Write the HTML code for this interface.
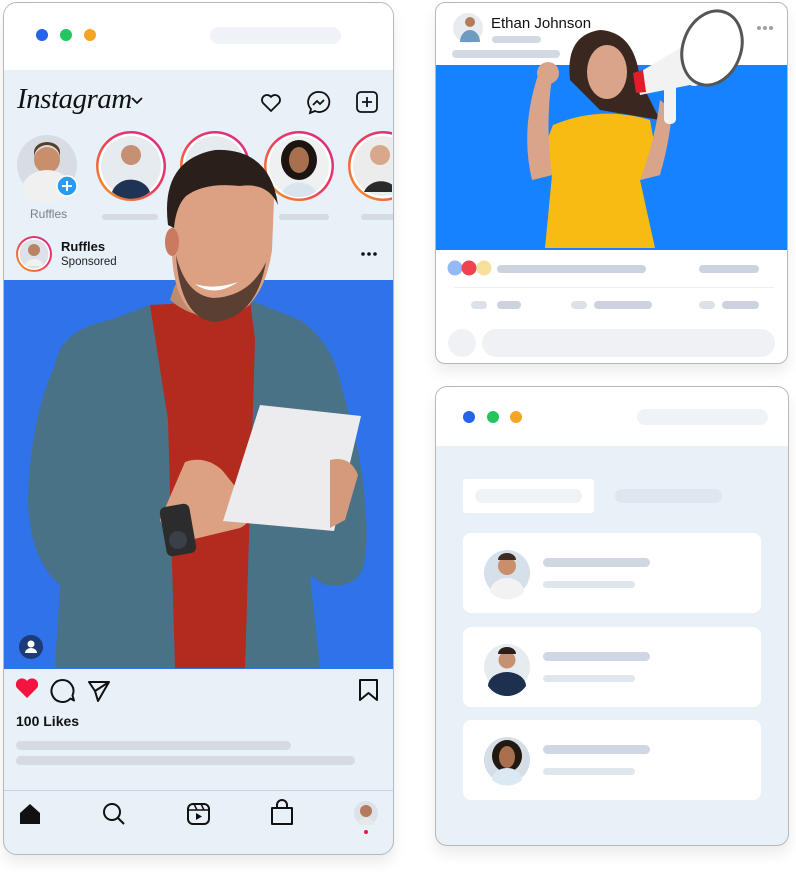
<!DOCTYPE html>
<html><head><meta charset="utf-8"><style>
*{margin:0;padding:0;box-sizing:border-box}
body{width:796px;height:880px;background:#fff;font-family:"Liberation Sans",Arial,sans-serif;position:relative;overflow:hidden}
.abs{position:absolute}
.card{position:absolute;border:1.5px solid #b8b8b8;border-radius:14px;overflow:hidden;box-shadow:0 8px 14px rgba(0,0,0,.08)}
.dot{position:absolute;width:12px;height:12px;border-radius:50%}
.bar{position:absolute;border-radius:6px}
</style></head><body>

<!-- LEFT PHONE -->
<div class="card" style="left:3px;top:2px;width:391px;height:853px;background:#e8f0f8">
  <div class="abs" style="left:0;top:0;width:100%;height:67px;background:#fff"></div>
  <div class="dot" style="left:32px;top:26px;background:#2563eb"></div>
  <div class="dot" style="left:56px;top:26px;background:#22c55e"></div>
  <div class="dot" style="left:80px;top:26px;background:#f5a524"></div>
  <div class="bar" style="left:206px;top:24px;width:131px;height:17px;background:#eff3f8;border-radius:9px"></div>

  <div class="abs" style="left:13px;top:80px;font-family:'Liberation Serif',serif;font-style:italic;font-size:29px;color:#111;letter-spacing:-0.5px">Instagram</div>
  <div class="bar" style="left:0;top:787px;width:100%;height:1px;background:#ccd3dd;border-radius:0"></div>
  <div class="abs" style="left:26px;top:204px;font-size:12px;color:#7a7f87">Ruffles</div>
  <div class="bar" style="left:98px;top:211px;width:56px;height:6px;background:#d6dbe3"></div>
  <div class="bar" style="left:275px;top:211px;width:50px;height:6px;background:#d6dbe3"></div>
  <div class="bar" style="left:357px;top:211px;width:40px;height:6px;background:#d6dbe3"></div>
  <div class="abs" style="left:57px;top:236px;font-size:13px;font-weight:bold;color:#111">Ruffles</div>
  <div class="abs" style="left:57px;top:253px;font-size:11.5px;color:#222">Sponsored</div>
  <div class="abs" style="left:0;top:277px;width:100%;height:389px;background:#2f72ea"></div>
  <div class="abs" style="left:12px;top:710px;font-size:14px;font-weight:bold;color:#111">100 Likes</div>
  <div class="bar" style="left:12px;top:738px;width:275px;height:9px;background:#d6dbe3"></div>
  <div class="bar" style="left:12px;top:753px;width:339px;height:9px;background:#d6dbe3"></div>
</div>

<!-- RIGHT TOP CARD -->
<div class="card" style="left:435px;top:2px;width:353px;height:362px;background:#fff;border-radius:10px">
  <div class="abs" style="left:55px;top:12px;font-size:15px;color:#111">Ethan Johnson</div>
  <div class="bar" style="left:56px;top:33px;width:49px;height:7px;background:#d3d9e2"></div>
  <div class="bar" style="left:16px;top:47px;width:108px;height:8px;background:#d3d9e2"></div>
  <div class="abs" style="left:0;top:62px;width:100%;height:185px;background:#1682ff"></div>
  <div class="bar" style="left:61px;top:262px;width:149px;height:8px;background:#ccd3de"></div>
  <div class="bar" style="left:263px;top:262px;width:60px;height:8px;background:#ccd3de"></div>
  <div class="bar" style="left:18px;top:284px;width:320px;height:1px;background:#eceff3"></div>
  <div class="bar" style="left:35px;top:298px;width:16px;height:8px;background:#dde2ea"></div>
  <div class="bar" style="left:61px;top:298px;width:24px;height:8px;background:#ccd3de"></div>
  <div class="bar" style="left:135px;top:298px;width:16px;height:8px;background:#dde2ea"></div>
  <div class="bar" style="left:158px;top:298px;width:58px;height:8px;background:#ccd3de"></div>
  <div class="bar" style="left:263px;top:298px;width:16px;height:8px;background:#dde2ea"></div>
  <div class="bar" style="left:286px;top:298px;width:37px;height:8px;background:#ccd3de"></div>
  <div class="abs" style="left:12px;top:326px;width:28px;height:28px;border-radius:50%;background:#eff1f5"></div>
  <div class="bar" style="left:46px;top:326px;width:293px;height:28px;border-radius:14px;background:#eff1f5"></div>
</div>

<!-- RIGHT BOTTOM CARD -->
<div class="card" style="left:435px;top:386px;width:354px;height:460px;background:#e8f0f8;border-radius:12px">
  <div class="abs" style="left:0;top:0;width:100%;height:59px;background:#fff"></div>
  <div class="dot" style="left:27px;top:24px;background:#2563eb"></div>
  <div class="dot" style="left:51px;top:24px;background:#22c55e"></div>
  <div class="dot" style="left:74px;top:24px;background:#f5a524"></div>
  <div class="bar" style="left:201px;top:22px;width:131px;height:16px;background:#eff3f8;border-radius:8px"></div>
  <div class="bar" style="left:27px;top:92px;width:131px;height:34px;background:#fff;border-radius:3px"></div>
  <div class="bar" style="left:39px;top:102px;width:107px;height:14px;background:#eff3f8;border-radius:7px"></div>
  <div class="bar" style="left:179px;top:102px;width:107px;height:14px;background:#dfe6ef;border-radius:7px"></div>
  <div class="bar" style="left:27px;top:146px;width:298px;height:80px;background:#fff;border-radius:8px"></div>
  <div class="bar" style="left:27px;top:240px;width:298px;height:80px;background:#fff;border-radius:8px"></div>
  <div class="bar" style="left:27px;top:333px;width:298px;height:80px;background:#fff;border-radius:8px"></div>
  <div class="bar" style="left:107px;top:171px;width:107px;height:9px;background:#cfd7e3"></div>
  <div class="bar" style="left:107px;top:194px;width:92px;height:7px;background:#e0e6ee"></div>
  <div class="bar" style="left:107px;top:265px;width:107px;height:9px;background:#cfd7e3"></div>
  <div class="bar" style="left:107px;top:288px;width:92px;height:7px;background:#e0e6ee"></div>
  <div class="bar" style="left:107px;top:358px;width:107px;height:9px;background:#cfd7e3"></div>
  <div class="bar" style="left:107px;top:381px;width:92px;height:7px;background:#e0e6ee"></div>
</div>

<svg class="abs" style="left:0;top:0" width="796" height="880" viewBox="0 0 796 880">
 <defs>
  <linearGradient id="ring" x1="0" y1="1" x2="1" y2="0">
   <stop offset="0" stop-color="#f7a21b"/><stop offset="0.5" stop-color="#ee3a5a"/><stop offset="1" stop-color="#d62a8a"/>
  </linearGradient>
  <clipPath id="phone"><rect x="4" y="0" width="388" height="880"/></clipPath>
 </defs>
 <path d="M132 98 l5 5 l5 -5" fill="none" stroke="#111" stroke-width="1.8"/>
 <path d="M271 111 l-8 -8 a4.6 4.6 0 0 1 8 -6 a4.6 4.6 0 0 1 8 6 z" fill="none" stroke="#111" stroke-width="1.8" stroke-linejoin="round"/>
 <path d="M319 92 a10 10 0 1 1 -4 19 l-5 2 l1 -4 a10 10 0 0 1 8 -17 z" fill="none" stroke="#111" stroke-width="1.8"/>
 <path d="M313 105 l4 -4 l3 3 l4 -4" fill="none" stroke="#111" stroke-width="1.8"/>
 <rect x="357" y="92" width="20" height="20" rx="4" fill="none" stroke="#111" stroke-width="1.8"/>
 <path d="M367 97 v10 M362 102 h10" stroke="#111" stroke-width="1.8"/>

 <g clip-path="url(#phone)">
 <circle cx="47" cy="165" r="30" fill="#d8dde4"/>
 <circle cx="47" cy="160" r="13" fill="#c98f6d"/><path d="M34 158 a13 13 0 0 1 26 0 l0 -6 a13 10 0 0 0 -26 0z" fill="#5a3e2c"/>
 <path d="M22 190 a25 20 0 0 1 50 0 a30 30 0 0 1 -50 0z" fill="#f0f0f0"/>
 <circle cx="67" cy="186" r="10" fill="#2b9af3" stroke="#fff" stroke-width="1.5"/>
 <path d="M67 181 v10 M62 186 h10" stroke="#fff" stroke-width="2"/>
  <circle cx="131" cy="166" r="35" fill="url(#ring)"/><circle cx="131" cy="166" r="32.5" fill="#fff"/><circle cx="131" cy="166" r="30" fill="#e6ebf0"/>
  <circle cx="131" cy="155" r="10" fill="#c69072"/><path d="M112 192 a20 18 0 0 1 38 0 a30 30 0 0 1 -38 0z" fill="#1f3454"/>
  <circle cx="215" cy="166" r="35" fill="url(#ring)"/><circle cx="215" cy="166" r="32.5" fill="#fff"/><circle cx="215" cy="166" r="30" fill="#e6ebf0"/>
  <circle cx="299" cy="166" r="35" fill="url(#ring)"/><circle cx="299" cy="166" r="32.5" fill="#fff"/><circle cx="299" cy="166" r="30" fill="#eef0f2"/>
  <ellipse cx="299" cy="160" rx="18" ry="20" fill="#1b1410"/><ellipse cx="299" cy="160" rx="10" ry="13" fill="#a8704e"/><path d="M282 192 a18 14 0 0 1 34 0 a30 30 0 0 1 -34 0z" fill="#d8e4ee"/>
  <circle cx="383" cy="166" r="35" fill="url(#ring)"/><circle cx="383" cy="166" r="32.5" fill="#fff"/><circle cx="383" cy="166" r="30" fill="#ececec"/>
  <circle cx="380" cy="155" r="10" fill="#d9a88a"/><path d="M364 192 a18 16 0 0 1 34 0z" fill="#2a2a2a"/>

 <circle cx="34" cy="254" r="18" fill="url(#ring)"/><circle cx="34" cy="254" r="16" fill="#fff"/><circle cx="34" cy="254" r="14.5" fill="#dde2e8"/>
 <circle cx="34" cy="250" r="6" fill="#b98263"/><path d="M25 266 a9 7 0 0 1 18 0z" fill="#f0f0f0"/>
 <circle cx="363" cy="254" r="1.8" fill="#111"/><circle cx="369" cy="254" r="1.8" fill="#111"/><circle cx="375" cy="254" r="1.8" fill="#111"/>

 <!-- man -->
 <path d="M55 365 Q60 330 110 320 L150 305 L250 300 L300 320 Q330 340 340 380 L358 450 Q370 520 365 560 Q360 590 325 585 L310 575 L320 668 L55 668 Q58 620 60 585 Q30 560 28 500 Q30 420 55 365 z" fill="#4a7286"/>
 <path d="M150 305 L250 300 L255 340 L245 668 L175 668 L168 420 Z" fill="#b32a1f"/>
 <path d="M170 300 Q205 330 250 305 L248 285 L175 285 Z" fill="#c08a6c"/>
 <path d="M172 200 Q172 160 222 158 Q274 160 274 200 L272 250 Q262 318 212 320 Q175 316 172 255 Z" fill="#dca183"/>
 <ellipse cx="172" cy="242" rx="7" ry="14" fill="#c97a60"/>
 <path d="M176 255 Q180 318 214 322 Q256 318 266 262 Q250 296 214 298 Q186 296 176 255 Z" fill="#5a3f32"/>
 <path d="M195 284 Q214 298 238 282 Q214 290 195 284z" fill="#fff"/>
 <path d="M168 225 Q160 160 215 150 Q270 148 278 205 Q268 182 240 186 Q205 182 186 196 Q176 206 174 228 Z" fill="#2a1f1a"/>
 <path d="M185 462 Q205 455 222 470 L250 505 Q255 520 240 528 L190 540 L172 548 L160 520 Z" fill="#dca183"/>
 <rect x="163" y="505" width="30" height="50" rx="6" fill="#2c2c2c" transform="rotate(-10 178 530)"/>
 <circle cx="178" cy="540" r="9" fill="#3a3f48"/>
 <path d="M260 405 L361 416 L334 531 L223 521 Z" fill="#ececee"/>
 <path d="M330 460 Q350 455 358 475 L345 520 L330 528 Z" fill="#d49a7c"/>
 </g>
 <circle cx="31" cy="647" r="12" fill="#1c3b78"/><circle cx="31" cy="644" r="3.5" fill="#fff"/><path d="M25 653 a6 5 0 0 1 12 0z" fill="#fff"/>

 <path d="M27 698 l-10 -10 a5.7 5.7 0 0 1 10 -7 a5.7 5.7 0 0 1 10 7 z" fill="#f5133f"/>
 <path d="M70.5 698.5 a11 11 0 1 1 2 -3 l1.5 5 z" fill="none" stroke="#111" stroke-width="2" stroke-linejoin="round"/>
 <path d="M89 682 l20 0 l-11 19 l-3 -10 z M95 691 l14 -9" fill="none" stroke="#111" stroke-width="2" stroke-linejoin="round"/>
 <path d="M360 680 h17 v20 l-8.5 -7 l-8.5 7 z" fill="none" stroke="#111" stroke-width="2" stroke-linejoin="round"/>

 <path d="M20 824 v-11 l10 -9 l10 9 v11 z" fill="#111"/>
 <circle cx="112" cy="812" r="8" fill="none" stroke="#111" stroke-width="2"/><path d="M118 818 l6 6" stroke="#111" stroke-width="2"/>
 <rect x="188" y="804" width="21" height="20" rx="5" fill="none" stroke="#111" stroke-width="2"/>
 <path d="M188 810 h21 M194 804 l3 6 M201 804 l3 6" stroke="#111" stroke-width="1.5"/><path d="M196 813 v7 l6 -3.5z" fill="#111"/>
 <path d="M272 808 h20 v16 h-20 z M277 808 v-3 a5 5 0 0 1 10 0 v3" fill="none" stroke="#111" stroke-width="2" stroke-linejoin="round"/>
 <circle cx="366" cy="813" r="12" fill="#dde2e8"/><circle cx="366" cy="811" r="6" fill="#b27b5c"/><path d="M358 825 a8 7 0 0 1 16 0z" fill="#e8e8e8"/>
 <circle cx="366" cy="832" r="2" fill="#f5133f"/>

 <circle cx="468" cy="28" r="15" fill="#e8ecf0"/><circle cx="470" cy="22" r="5" fill="#b27b5c"/><path d="M460 42 a10 12 0 0 1 20 0z" fill="#6d9cc0"/>
 <circle cx="759" cy="28" r="2" fill="#9aa1ab"/><circle cx="765" cy="28" r="2" fill="#9aa1ab"/><circle cx="771" cy="28" r="2" fill="#9aa1ab"/>
 <!-- woman -->
 <path d="M570 80 Q565 35 600 30 Q635 32 640 80 L660 120 L600 110 Z" fill="#3a2720"/>
 <ellipse cx="607" cy="72" rx="20" ry="27" fill="#d9a48a"/>
 <path d="M553 125 Q600 105 650 120 L660 175 L640 180 L655 248 L545 248 L552 175 L532 180 Z" fill="#f7bb12"/>
 <path d="M532 180 Q520 130 538 75 L552 78 Q545 125 552 175 Z" fill="#d9a48a"/>
 <circle cx="548" cy="73" r="11" fill="#d9a48a"/>
 <path d="M640 180 L660 175 Q670 140 672 110 L660 100 Q655 140 640 180Z" fill="#d9a48a"/>
 <path d="M635 75 L690 42 Q700 30 710 50 L712 70 Q700 90 690 85 L640 95 Z" fill="#f2f2f2"/>
 <ellipse cx="712" cy="48" rx="29" ry="38" fill="#fff" stroke="#555" stroke-width="3" transform="rotate(20 712 48)"/>
 <path d="M633 73 L643 70 L646 92 L636 93 Z" fill="#e11d2a"/>
 <rect x="664" y="82" width="12" height="42" rx="5" fill="#f2f2f2"/>
 <circle cx="455" cy="268" r="7.5" fill="#94b8f8"/><circle cx="469" cy="268" r="7.5" fill="#f0424f"/><circle cx="484" cy="268" r="7.5" fill="#f6e09a"/>

 <circle cx="507" cy="573" r="23" fill="#d6e0ea"/><circle cx="507" cy="566" r="9" fill="#c98f6d"/><path d="M498 560 a9 7 0 0 1 18 0z" fill="#3d2a20"/><path d="M490 592 a17 14 0 0 1 34 0 a23 23 0 0 1 -34 0z" fill="#f2f2f2"/>
 <circle cx="507" cy="667" r="23" fill="#e6ebf0"/><circle cx="507" cy="660" r="8.5" fill="#c69072"/><path d="M498 654 a9 7 0 0 1 18 0z" fill="#2a1f1a"/><path d="M488 686 a19 14 0 0 1 38 0 a23 23 0 0 1 -38 0z" fill="#1d3050"/>
 <circle cx="507" cy="760" r="23" fill="#d5dde6"/><ellipse cx="507" cy="756" rx="15" ry="16" fill="#221812"/><ellipse cx="507" cy="757" rx="8" ry="11" fill="#a8704e"/><path d="M492 780 a15 12 0 0 1 30 0 a23 23 0 0 1 -30 0z" fill="#dce8f2"/>
</svg>
</body></html>
